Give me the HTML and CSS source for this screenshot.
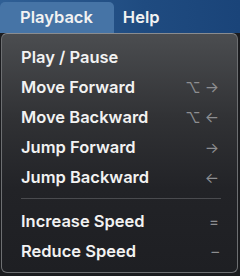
FILE: index.html
```html
<!DOCTYPE html>
<html>
<head>
    <title>Playback menu</title>
    <link rel="stylesheet" href="styles.css">
</head>
<body>
    <div class="menubar">
        <div class="menubar-item active">Playback</div>
        <div class="menubar-item">Help</div>
    </div>
    <div class="menu">
        <div class="menu-item"><span>Play / Pause</span></div>
        <div class="menu-item"><span>Move Forward</span><span class="key">⌥ →</span></div>
        <div class="menu-item"><span>Move Backward</span><span class="key">⌥ ←</span></div>
        <div class="menu-item"><span>Jump Forward</span><span class="key">→</span></div>
        <div class="menu-item"><span>Jump Backward</span><span class="key">←</span></div>
        <div class="separator"></div>
        <div class="menu-item"><span>Increase Speed</span><span class="key">=</span></div>
        <div class="menu-item"><span>Reduce Speed</span><span class="key">–</span></div>
    </div>
</body>
</html>
```

FILE: styles.css
```css
body {
    margin: 0;
    width: 240px;
    height: 276px;
    background: #1b1c1f;
    font-family: Inter, "Noto Sans", sans-serif;
    color: #f2f2f2;
    overflow: hidden;
}
.menubar {
    display: flex;
    align-items: flex-end;
    height: 33px;
    background: linear-gradient(90deg, #2f5f95 0%, #1f4b80 60%, #1a4479 100%);
}
.menubar-item {
    font-size: 16.5px;
    font-weight: 600;
    height: 31px;
    line-height: 30px;
    padding: 0 10px 0 9px;
    border-radius: 5px 5px 0 0;
}
.menubar-item.active {
    background: #4674a6;
    padding: 0 21px 0 20px;
}
.menu {
    height: 240px;
    margin: 0 2px 0 1px;
    border: 1px solid #6d6f72;
    border-top-color: #8a8c8f;
    border-radius: 6px;
    background: linear-gradient(180deg, #4b4d50 0%, #313235 35%, #222327 65%, #1e1f23 100%);
    padding-top: 8px;
    box-sizing: border-box;
}
.menu-item {
    display: flex;
    justify-content: space-between;
    align-items: center;
    height: 30px;
    padding: 0 18px 0 19px;
    font-size: 16.5px;
    font-weight: 600;
}
.key {
    color: #8d8e91;
    font-weight: 400;
    font-size: 15px;
}
.separator {
    height: 1px;
    background: #4a4b4f;
    margin: 6px 16px 7px 19px;
}
```
